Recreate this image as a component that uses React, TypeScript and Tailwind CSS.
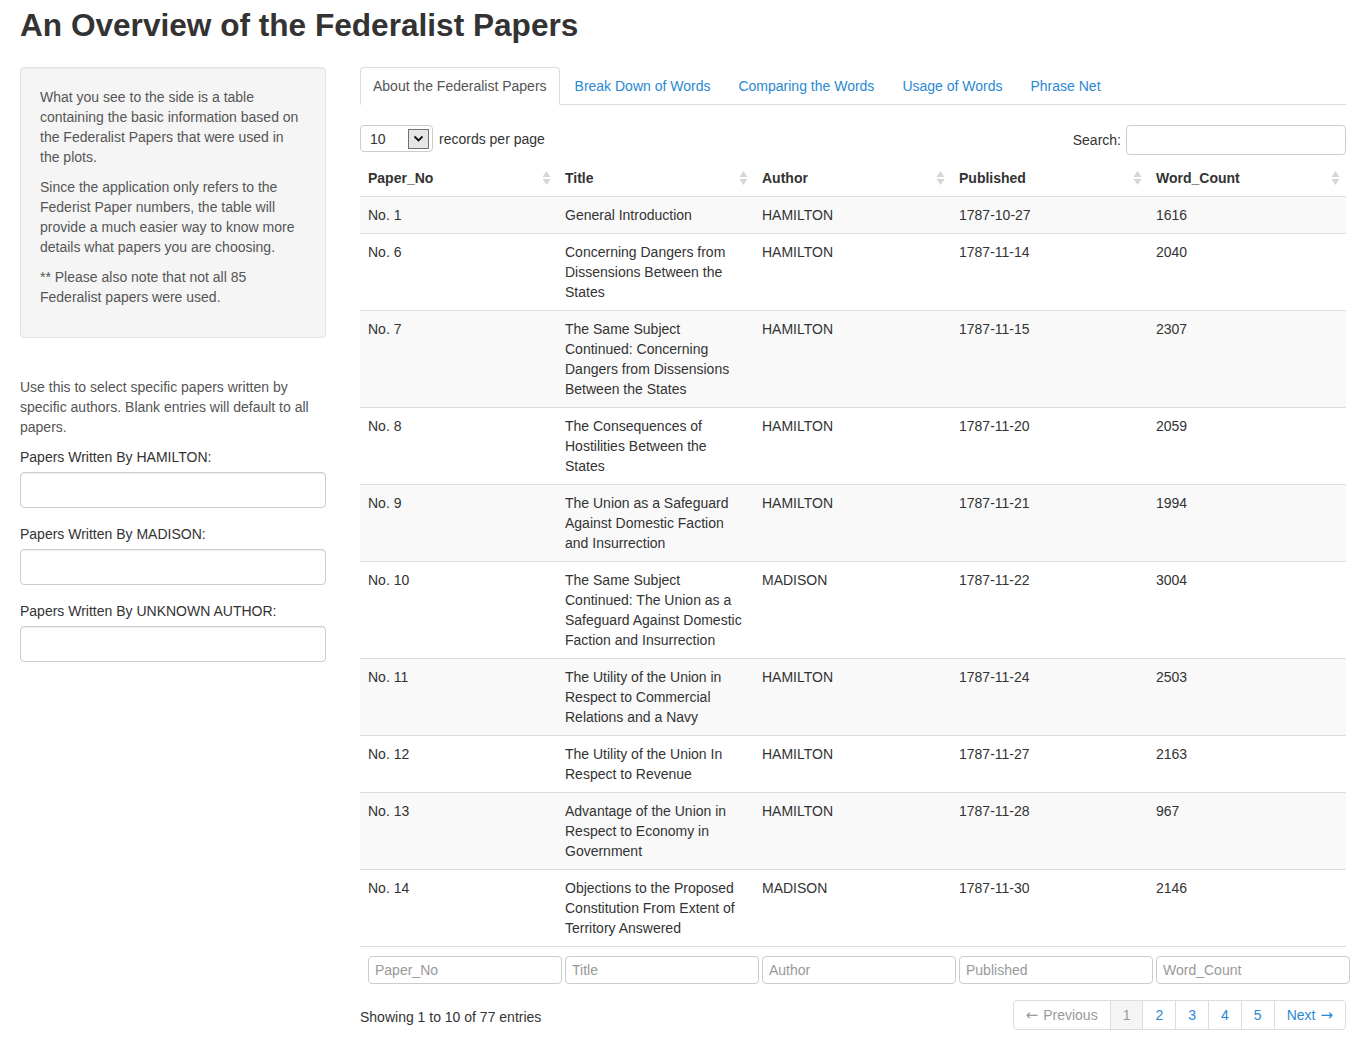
import React from "react";

const rows = [
  { no: "No. 1", title: "General Introduction", author: "HAMILTON", date: "1787-10-27", count: "1616" },
  { no: "No. 6", title: "Concerning Dangers from Dissensions Between the States", author: "HAMILTON", date: "1787-11-14", count: "2040" },
  { no: "No. 7", title: "The Same Subject Continued: Concerning Dangers from Dissensions Between the States", author: "HAMILTON", date: "1787-11-15", count: "2307" },
  { no: "No. 8", title: "The Consequences of Hostilities Between the States", author: "HAMILTON", date: "1787-11-20", count: "2059" },
  { no: "No. 9", title: "The Union as a Safeguard Against Domestic Faction and Insurrection", author: "HAMILTON", date: "1787-11-21", count: "1994" },
  { no: "No. 10", title: "The Same Subject Continued: The Union as a Safeguard Against Domestic Faction and Insurrection", author: "MADISON", date: "1787-11-22", count: "3004" },
  { no: "No. 11", title: "The Utility of the Union in Respect to Commercial Relations and a Navy", author: "HAMILTON", date: "1787-11-24", count: "2503" },
  { no: "No. 12", title: "The Utility of the Union In Respect to Revenue", author: "HAMILTON", date: "1787-11-27", count: "2163" },
  { no: "No. 13", title: "Advantage of the Union in Respect to Economy in Government", author: "HAMILTON", date: "1787-11-28", count: "967" },
  { no: "No. 14", title: "Objections to the Proposed Constitution From Extent of Territory Answered", author: "MADISON", date: "1787-11-30", count: "2146" },
];

const columns = ["Paper_No", "Title", "Author", "Published", "Word_Count"];
const tabs = ["Break Down of Words", "Comparing the Words", "Usage of Words", "Phrase Net"];
const authors = ["HAMILTON", "MADISON", "UNKNOWN AUTHOR"];

function SortIcon() {
  return (
    <svg width="9" height="16" viewBox="0 0 9 16" className="shrink-0">
      <path d="M4.5 1 L8.5 7 L0.5 7 Z" fill="#d6d6d6" />
      <path d="M4.5 15 L8.5 9 L0.5 9 Z" fill="#d6d6d6" />
    </svg>
  );
}

const grid = "grid grid-cols-[197px_197px_197px_197px_198px]";

export default function App() {
  return (
    <div className="min-h-[1040px] bg-white text-[14px] leading-[20px] text-[#333] font-['Liberation_Sans',Arial,sans-serif] px-5">
      <h2 className="pt-[9px] text-[31.6px] leading-[33px] font-bold text-[#333]">
        An Overview of the Federalist Papers
      </h2>

      <div className="flex gap-[34px] mt-[25px]">
        {/* Sidebar */}
        <div className="w-[306px] shrink-0">
          <div className="bg-[#f5f5f5] border border-[#e3e3e3] rounded-[4px] px-[19px] pt-[19px] pb-[20px] text-[#555] shadow-[inset_0_1px_1px_rgba(0,0,0,0.05)]">
            <p className="mb-[10px]">
              What you see to the side is a table containing the basic information based on the Federalist Papers that were used in the plots.
            </p>
            <p className="mb-[10px]">
              Since the application only refers to the Federist Paper numbers, the table will provide a much easier way to know more details what papers you are choosing.
            </p>
            <p className="mb-[10px]">
              ** Please also note that not all 85 Federalist papers were used.
            </p>
          </div>

          <p className="mt-[39px] mb-[10px] text-[#555]">
            Use this to select specific papers written by specific authors. Blank entries will default to all papers.
          </p>
          {authors.map((a) => (
            <div key={a} className="mb-4">
              <label className="block mb-[5px]">Papers Written By {a}:</label>
              <input
                type="text"
                className="block w-full h-[36px] border border-[#ccc] rounded-[4px] px-3 bg-white shadow-[inset_0_1px_1px_rgba(0,0,0,0.075)] outline-none"
              />
            </div>
          ))}
        </div>

        {/* Main panel */}
        <div className="w-[986px] shrink-0">
          <div className="flex border-b border-[#ddd] h-[38px]">
            <div className="h-[38px] px-[12px] mr-[2px] border border-[#ddd] border-b-white rounded-t-[4px] bg-white text-[#555] flex items-center">
              About the Federalist Papers
            </div>
            {tabs.map((t) => (
              <div key={t} className="h-[37px] px-[12px] mr-[2px] border border-transparent flex items-center text-[#2a88d4]">
                {t}
              </div>
            ))}
          </div>

          <div className="flex items-start justify-between mt-[20px]">
            <div className="flex items-center h-[27px]">
              <div className="w-[73px] h-[27px] border border-[#ccc] rounded-[4px] flex items-center justify-between pl-[9px] pr-[3px]">
                <span>10</span>
                <span className="w-[21px] h-[20px] border border-[#707070] bg-[#e6e6e6] flex items-center justify-center">
                  <svg width="11" height="8" viewBox="0 0 11 8">
                    <path d="M1.5 1.5 L5.5 5.5 L9.5 1.5" fill="none" stroke="#111" strokeWidth="1.8" />
                  </svg>
                </span>
              </div>
              <span className="ml-[6px]">records per page</span>
            </div>
            <div className="flex items-center">
              <span className="mr-[5px]">Search:</span>
              <input
                type="text"
                className="w-[220px] h-[30px] border border-[#ccc] rounded-[4px] px-2 outline-none"
              />
            </div>
          </div>

          {/* Table */}
          <div className="mt-[5px]">
            <div className={`${grid} border-b border-[#ddd]`}>
              {columns.map((c) => (
                <div key={c} className="flex items-center justify-between pl-2 pr-[6px] py-2 font-bold">
                  <span>{c}</span>
                  <SortIcon />
                </div>
              ))}
            </div>
            {rows.map((r, i) => (
              <div key={r.no} className={`${grid} border-b border-[#ddd] ${i % 2 === 0 ? "bg-[#f9f9f9]" : "bg-white"}`}>
                <div className="p-2">{r.no}</div>
                <div className="p-2">{r.title}</div>
                <div className="p-2">{r.author}</div>
                <div className="p-2">{r.date}</div>
                <div className="p-2">{r.count}</div>
              </div>
            ))}
            <div className={`${grid} pt-[9px]`}>
              {columns.map((c) => (
                <div key={c} className="pl-2 pr-0">
                  <input
                    type="text"
                    placeholder={c}
                    className="w-[194px] h-[28px] border border-[#ccc] rounded-[4px] px-[6px] text-[14px] placeholder:text-[#999] outline-none"
                  />
                </div>
              ))}
            </div>
          </div>

          <div className="flex items-center justify-between mt-[16px]">
            <span className="mt-[4px]">Showing 1 to 10 of 77 entries</span>
            <div className="flex border border-[#ddd] rounded-[4px] h-[30px] text-[#2a88d4]">
              <span className="px-[12px] flex items-center gap-[5px] text-[#999] border-r border-[#ddd]">
                <span className="font-['DejaVu_Sans',sans-serif] text-[15px]">←</span>Previous
              </span>
              <span className="px-[12px] flex items-center text-[#999] bg-[#f5f5f5] border-r border-[#ddd]">1</span>
              <span className="px-[12px] flex items-center border-r border-[#ddd]">2</span>
              <span className="px-[12px] flex items-center border-r border-[#ddd]">3</span>
              <span className="px-[12px] flex items-center border-r border-[#ddd]">4</span>
              <span className="px-[12px] flex items-center border-r border-[#ddd]">5</span>
              <span className="px-[12px] flex items-center gap-[5px]">
                Next<span className="font-['DejaVu_Sans',sans-serif] text-[15px]">→</span>
              </span>
            </div>
          </div>
        </div>
      </div>
    </div>
  );
}
